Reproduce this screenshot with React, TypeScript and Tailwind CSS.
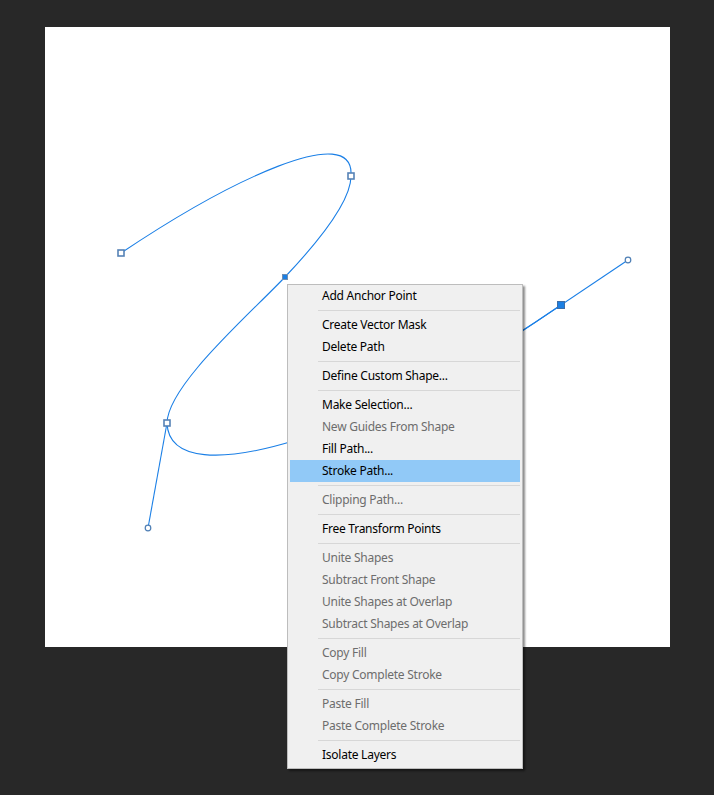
type MenuEntry = { label: string; disabled?: boolean; active?: boolean } | 'sep';

const menu: MenuEntry[] = [
  { label: 'Add Anchor Point' },
  'sep',
  { label: 'Create Vector Mask' },
  { label: 'Delete Path' },
  'sep',
  { label: 'Define Custom Shape...' },
  'sep',
  { label: 'Make Selection...' },
  { label: 'New Guides From Shape', disabled: true },
  { label: 'Fill Path...' },
  { label: 'Stroke Path...', active: true },
  'sep',
  { label: 'Clipping Path...', disabled: true },
  'sep',
  { label: 'Free Transform Points' },
  'sep',
  { label: 'Unite Shapes', disabled: true },
  { label: 'Subtract Front Shape', disabled: true },
  { label: 'Unite Shapes at Overlap', disabled: true },
  { label: 'Subtract Shapes at Overlap', disabled: true },
  'sep',
  { label: 'Copy Fill', disabled: true },
  { label: 'Copy Complete Stroke', disabled: true },
  'sep',
  { label: 'Paste Fill', disabled: true },
  { label: 'Paste Complete Stroke', disabled: true },
  'sep',
  { label: 'Isolate Layers' },
];

function PathDrawing() {
  // page coords, shifted by canvas offset (45, 27)
  const line = '#1a7fe6';
  return (
    <svg
      className="absolute left-0 top-0"
      width={625}
      height={620}
      viewBox="45 27 625 620"
      fill="none"
    >
      <path
        d="M121 253 C230 180 355 120 351 176 C351 200 320 240 285 277 C250 314 168 385 167 423 C170 500 380 430 561 305"
        stroke={line}
        strokeWidth={1.1}
      />
      {/* direction lines */}
      <line x1={167} y1={423} x2={148} y2={528} stroke={line} strokeWidth={1.1} />
      <line x1={494} y1={350} x2={628} y2={260} stroke={line} strokeWidth={1.1} />
      <circle cx={148} cy={528} r={2.8} fill="#fff" stroke="#4f7fb5" strokeWidth={1.2} />
      <circle cx={628} cy={260} r={2.8} fill="#fff" stroke="#4f7fb5" strokeWidth={1.2} />
      {/* anchors */}
      <rect x={118} y={250} width={6} height={6} fill="#fff" stroke="#5682b6" strokeWidth={1.6} />
      <rect x={348} y={173} width={6} height={6} fill="#fff" stroke="#5682b6" strokeWidth={1.6} />
      <rect x={164} y={420} width={6} height={6} fill="#fff" stroke="#5682b6" strokeWidth={1.6} />
      <rect x={282.5} y={274.5} width={5} height={5} fill="#1b7fe3" stroke="#6f8fb3" strokeWidth={1} />
      <rect x={557.5} y={301.5} width={7} height={7} fill="#1b7fe3" stroke="#3d6ea8" strokeWidth={1} />
    </svg>
  );
}

export default function App() {
  return (
    <div
      className="w-[714px] h-[795px] bg-[#282828] pl-[45px] pt-[27px] overflow-hidden"
      style={{ fontFamily: '"Noto Sans", "Noto Sans CJK KR", sans-serif' }}
    >
      <div className="relative w-[625px] h-[620px] bg-white">
        <PathDrawing />

        {/* Context menu */}
        <div className="absolute left-[242px] top-[257px] w-[236px] bg-[#f0f0f0] border border-[#bdbdbd] pb-[2px] px-[2px] shadow-[2px_2px_2px_rgba(0,0,0,0.45)]">
          {menu.map((m, i) =>
            m === 'sep' ? (
              <div key={i} className="h-[7px] flex items-center pl-[28px]">
                <div className="h-px w-full bg-[#d7d7d7]" />
              </div>
            ) : (
              <div
                key={i}
                className={`h-[22px] flex items-center pl-[32px] text-[12px] leading-none tracking-[-0.25px] ${
                  m.active ? 'bg-[#91c9f7]' : ''
                } ${m.disabled ? 'text-[#6d6d6d]' : 'text-black'}`}
              >
                {m.label}
              </div>
            )
          )}
        </div>
      </div>
    </div>
  );
}
